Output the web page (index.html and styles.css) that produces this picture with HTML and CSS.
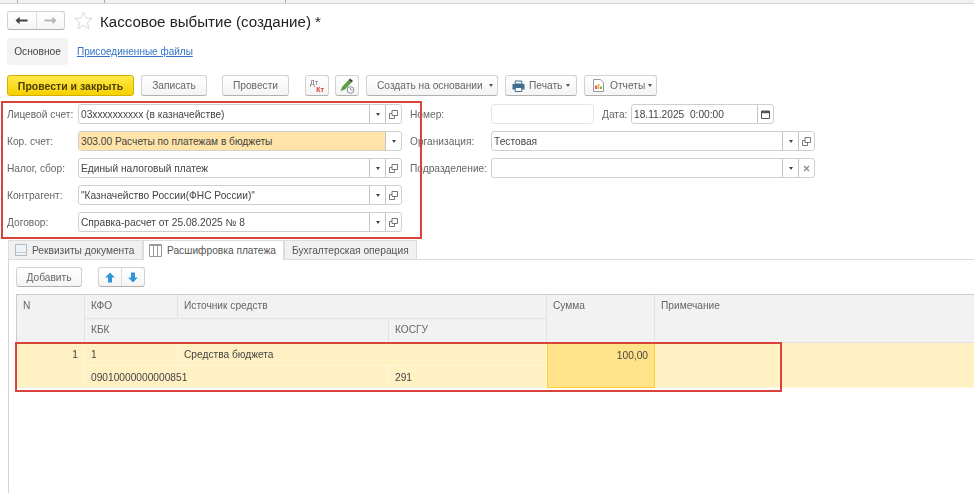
FILE: index.html
```html
<!DOCTYPE html>
<html lang="ru">
<head>
    <meta charset="UTF-8">
    <title>Кассовое выбытие (создание)</title>
    <link rel="stylesheet" href="styles.css">
</head>
<body>
    <div class="page">
        <div class="top-strip">
            <span class="strip-cell strip-a"></span>
            <span class="strip-cell strip-b"></span>
            <span class="strip-cell strip-c"></span>
        </div>

        <div class="title-row">
            <div class="nav-group">
                <button class="nav-btn">
                    <svg width="13" height="9" viewBox="0 0 13 9"><path d="M0.5 4.5 L4.6 0.8 V3.4 H12.5 V5.6 H4.6 V8.2 Z" fill="#444"/></svg>
                </button>
                <button class="nav-btn">
                    <svg width="13" height="9" viewBox="0 0 13 9"><path d="M12.5 4.5 L8.4 0.8 V3.4 H0.5 V5.6 H8.4 V8.2 Z" fill="#b5b5b5"/></svg>
                </button>
            </div>
            <svg class="star" width="19" height="19" viewBox="0 0 19 19"><path d="M9.5 1.2 L12 7 L18.2 7.5 L13.4 11.6 L14.9 17.7 L9.5 14.4 L4.1 17.7 L5.6 11.6 L0.8 7.5 L7 7 Z" fill="#fff" stroke="#d4d8dc"/></svg>
            <h1>Кассовое выбытие (создание) *</h1>
        </div>

        <div class="section-row">
            <span class="section-tab">Основное</span>
            <a class="section-link">Присоединенные файлы</a>
        </div>

        <div class="toolbar">
            <button class="btn btn-main">Провести и закрыть</button>
            <button class="btn btn-save">Записать</button>
            <button class="btn btn-post">Провести</button>
            <button class="btn btn-icon btn-dtkt"><span class="dt">Дт</span><span class="kt">Кт</span></button>
            <button class="btn btn-icon btn-gap">
                <svg width="18" height="18" viewBox="0 0 18 18"><path d="M2.5 14 L4 10 L10.5 3 L13.5 5.5 L7 12.5 Z" fill="#5f9e45"/><path d="M10.5 3 L12 1.6 L15 4 L13.5 5.5 Z" fill="#444"/><circle cx="12.5" cy="13" r="3.3" fill="#fff" stroke="#7a8a96"/><path d="M12.5 11 V13 H14.3" fill="none" stroke="#7a8a96" stroke-width=".8"/></svg>
            </button>
            <button class="btn btn-create">Создать на основании<i class="caret"></i></button>
            <button class="btn btn-print">
                <svg width="13" height="12" viewBox="0 0 13 12"><path d="M3.2 1 H9.8 V4 H3.2 Z" fill="#fff" stroke="#3f6d8e"/><path d="M.5 4 H12.5 V9.5 H.5 Z" fill="#3f6d8e"/><path d="M3.2 7.5 H9.8 V11.5 H3.2 Z" fill="#fff" stroke="#3f6d8e"/></svg>
                <span>Печать</span><i class="caret"></i>
            </button>
            <button class="btn btn-report">
                <svg width="11" height="13" viewBox="0 0 11 13"><path d="M.5 .5 H7.5 L10.5 3.5 V12.5 H.5 Z" fill="#fff" stroke="#999"/><path d="M3 6.5 V10" stroke="#d8352a" stroke-width="1.6"/><path d="M5.5 5 V10" stroke="#e0a820" stroke-width="1.6"/><path d="M8 7.5 V10" stroke="#4f9a3c" stroke-width="1.6"/></svg>
                <span>Отчеты</span><i class="caret"></i>
            </button>
        </div>

        <div class="form">
            <div class="form-left">
                <div class="form-row">
                    <label>Лицевой счет:</label>
                    <div class="field"><span class="field-val">03xxxxxxxxxx (в казначействе)</span><span class="field-btn"><i class="caret-dark"></i></span><span class="field-btn"><svg class="open-icon" width="9" height="9" viewBox="0 0 9 9"><path d="M3 .5 H8.5 V5.5 H3 Z M.5 3.5 H3 M.5 3.5 V8.5 H5.5 V5.5" fill="none" stroke="#777"/></svg></span></div>
                </div>
                <div class="form-row">
                    <label>Кор. счет:</label>
                    <div class="field"><span class="field-val field-required">303.00 Расчеты по платежам в бюджеты</span><span class="field-btn"><i class="caret-dark"></i></span></div>
                </div>
                <div class="form-row">
                    <label>Налог, сбор:</label>
                    <div class="field"><span class="field-val">Единый налоговый платеж</span><span class="field-btn"><i class="caret-dark"></i></span><span class="field-btn"><svg class="open-icon" width="9" height="9" viewBox="0 0 9 9"><path d="M3 .5 H8.5 V5.5 H3 Z M.5 3.5 H3 M.5 3.5 V8.5 H5.5 V5.5" fill="none" stroke="#777"/></svg></span></div>
                </div>
                <div class="form-row">
                    <label>Контрагент:</label>
                    <div class="field"><span class="field-val">"Казначейство России(ФНС России)"</span><span class="field-btn"><i class="caret-dark"></i></span><span class="field-btn"><svg class="open-icon" width="9" height="9" viewBox="0 0 9 9"><path d="M3 .5 H8.5 V5.5 H3 Z M.5 3.5 H3 M.5 3.5 V8.5 H5.5 V5.5" fill="none" stroke="#777"/></svg></span></div>
                </div>
                <div class="form-row">
                    <label>Договор:</label>
                    <div class="field"><span class="field-val">Справка-расчет от 25.08.2025 № 8</span><span class="field-btn"><i class="caret-dark"></i></span><span class="field-btn"><svg class="open-icon" width="9" height="9" viewBox="0 0 9 9"><path d="M3 .5 H8.5 V5.5 H3 Z M.5 3.5 H3 M.5 3.5 V8.5 H5.5 V5.5" fill="none" stroke="#777"/></svg></span></div>
                </div>
            </div>
            <div class="form-right">
                <div class="form-row">
                    <label class="label-right">Номер:</label>
                    <div class="field field-number"><span class="field-val"></span></div>
                    <label class="label-date">Дата:</label>
                    <div class="field field-date"><span class="field-val">18.11.2025&nbsp; 0:00:00</span><span class="field-btn"><svg width="9" height="9" viewBox="0 0 9 9"><path d="M.5 1 H8.5 V8.5 H.5 Z" fill="#fff" stroke="#555"/><path d="M.5 1 H8.5 V3.2 H.5 Z" fill="#555"/></svg></span></div>
                </div>
                <div class="form-row">
                    <label class="label-right">Организация:</label>
                    <div class="field field-wide"><span class="field-val">Тестовая</span><span class="field-btn"><i class="caret-dark"></i></span><span class="field-btn"><svg class="open-icon" width="9" height="9" viewBox="0 0 9 9"><path d="M3 .5 H8.5 V5.5 H3 Z M.5 3.5 H3 M.5 3.5 V8.5 H5.5 V5.5" fill="none" stroke="#777"/></svg></span></div>
                </div>
                <div class="form-row">
                    <label class="label-right">Подразделение:</label>
                    <div class="field field-wide"><span class="field-val"></span><span class="field-btn"><i class="caret-dark"></i></span><span class="field-btn"><svg width="7" height="7" viewBox="0 0 7 7"><path d="M1 1 L6 6 M6 1 L1 6" stroke="#888" stroke-width="1.2"/></svg></span></div>
                </div>
            </div>
        </div>

        <div class="tabs">
            <span class="tab tab-1">
                <svg width="12" height="12" viewBox="0 0 12 12"><rect x=".5" y=".5" width="11" height="11" fill="#eef3f8" stroke="#b4bcc4"/><path d="M1 8.5 H11" stroke="#c3ccd4"/></svg>
                Реквизиты документа
            </span>
            <span class="tab tab-2 tab-active">
                <svg width="13" height="13" viewBox="0 0 13 13"><path d="M.5 .5 H12.5 V12.5 H.5 Z M4.5 .5 V12.5 M8.5 .5 V12.5" fill="none" stroke="#999"/><path d="M.5 1.5 H12.5" stroke="#999"/></svg>
                Расшифровка платежа
            </span>
            <span class="tab tab-3">Бухгалтерская операция</span>
        </div>

        <div class="panel">
            <div class="panel-bar">
                <button class="btn btn-add">Добавить</button>
                <div class="move-group">
                    <button class="move-btn"><svg width="10" height="11" viewBox="0 0 10 11"><path d="M5 .5 L9.8 5.5 H7 V10.5 H3 V5.5 H.2 Z" fill="#2f95d8"/></svg></button>
                    <button class="move-btn"><svg width="10" height="11" viewBox="0 0 10 11"><path d="M5 10.5 L9.8 5.5 H7 V.5 H3 V5.5 H.2 Z" fill="#2f95d8"/></svg></button>
                </div>
            </div>

            <div class="grid">
                <div class="cell head c-n">N</div>
                <div class="cell head c-kfo">КФО</div>
                <div class="cell head c-src">Источник средств</div>
                <div class="cell head c-sum">Сумма</div>
                <div class="cell head c-note">Примечание</div>
                <div class="cell head c-kbk">КБК</div>
                <div class="cell head c-kosgu">КОСГУ</div>

                <div class="cell row c-n num">1</div>
                <div class="cell row c-kfo">1</div>
                <div class="cell row c-src">Средства бюджета</div>
                <div class="cell row c-sum sum-active num">100,00</div>
                <div class="cell row c-note"></div>
                <div class="cell row c-kbk">09010000000000851</div>
                <div class="cell row c-kosgu">291</div>
            </div>
        </div>

        <div class="mark mark-form"></div>
        <div class="mark mark-row"></div>
    </div>
</body>
</html>
```

FILE: styles.css
```css
* {
    box-sizing: border-box;
}
html, body {
    margin: 0;
    height: 100%;
    background: #fff;
}
.page {
    position: relative;
    width: 974px;
    height: 493px;
    overflow: hidden;
    font-family: "Liberation Sans", Arial, sans-serif;
    font-size: 10.2px;
    color: #444;
    filter: blur(0.35px);
}
button {
    font: inherit;
    color: inherit;
    cursor: pointer;
}

/* top strip */
.top-strip {
    display: flex;
    height: 4px;
    background: #f2f2f2;
    border-bottom: 1px solid #d4d4d4;
}
.strip-cell {
    border-right: 1px solid #aaa;
}
.strip-a { width: 18px; }
.strip-b { width: 87px; }
.strip-c { width: 181px; }

/* title */
.title-row {
    display: flex;
    align-items: center;
    height: 20px;
    margin-top: 6px;
    padding-left: 7px;
}
.nav-group {
    display: flex;
    width: 58px;
    height: 19px;
    border: 1px solid #d2d2d2;
    border-bottom-color: #b0b0b0;
    border-radius: 3px;
    background: linear-gradient(#fff, #f5f5f5);
}
.nav-btn {
    flex: 1;
    display: flex;
    align-items: center;
    justify-content: center;
    padding: 0;
    border: 0;
    background: none;
}
.nav-btn + .nav-btn {
    border-left: 1px solid #ddd;
}
.star {
    margin-left: 9px;
}
h1 {
    margin: 2px 0 0 7px;
    font-size: 15.1px;
    font-weight: normal;
    color: #222;
}

/* sections */
.section-row {
    display: flex;
    align-items: center;
    height: 27px;
    margin-top: 8px;
    padding-left: 7px;
}
.section-tab {
    display: flex;
    align-items: center;
    justify-content: center;
    width: 61px;
    height: 27px;
    background: #f3f3f3;
    border-radius: 3px;
}
.section-link {
    margin-left: 9px;
    font-size: 10px;
    color: #3273c9;
    text-decoration: underline;
}

/* toolbar */
.toolbar {
    display: flex;
    height: 21px;
    margin-top: 10px;
    padding-left: 7px;
}
.btn {
    display: flex;
    align-items: center;
    justify-content: center;
    height: 21px;
    padding: 0;
    border: 1px solid #d2d2d2;
    border-bottom-color: #b0b0b0;
    border-radius: 3px;
    background: linear-gradient(#fff, #f4f4f4);
    color: #666;
    white-space: nowrap;
}
.btn-main {
    width: 127px;
    border-color: #d0b000;
    background: linear-gradient(#ffe94a, #f8d000);
    color: #4a3f00;
    font-size: 10.5px;
    font-weight: bold;
}
.btn-save { width: 66px; margin-left: 7px; }
.btn-post { width: 67px; margin-left: 15px; }
.btn-icon { width: 24px; margin-left: 16px; }
.btn-gap { margin-left: 6px; }
.btn-create { width: 132px; margin-left: 7px; justify-content: flex-start; padding-left: 10px; }
.btn-print { width: 72px; margin-left: 7px; justify-content: flex-start; padding-left: 6px; gap: 4px; }
.btn-report { width: 73px; margin-left: 7px; justify-content: flex-start; padding-left: 8px; gap: 6px; }
.btn-print .caret { margin-left: 0; }
.btn-report .caret { margin-left: -3px; }
.caret {
    width: 0;
    height: 0;
    margin-left: 6px;
    border: 2.5px solid transparent;
    border-top: 3px solid #555;
    border-bottom: 0;
}
.btn-dtkt {
    flex-direction: column;
    align-items: stretch;
    font-size: 7px;
    line-height: 7px;
    padding: 0 4px;
}
.dt { color: #667; text-align: left; }
.kt { color: #d8352a; font-weight: bold; text-align: right; }

/* form */
.form {
    display: flex;
    margin-top: 8px;
    padding-left: 7px;
}
.form-left {
    width: 403px;
    display: flex;
    flex-direction: column;
    gap: 7px;
}
.form-right {
    display: flex;
    flex-direction: column;
    gap: 7px;
}
.form-row {
    display: flex;
    align-items: center;
    height: 20px;
}
label {
    width: 71px;
    color: #666;
}
.label-right {
    width: 81px;
}
.label-date {
    width: 29px;
    margin-left: 8px;
}
.field {
    display: flex;
    width: 324px;
    height: 20px;
    border: 1px solid #cfcfcf;
    border-radius: 3px;
    background: #fff;
    overflow: hidden;
}
.field-number { width: 103px; border-color: #e6e6e6; }
.field-date { width: 143px; }
.field-wide { width: 324px; }
.field-val {
    flex: 1;
    padding-left: 2px;
    line-height: 19px;
    white-space: nowrap;
}
.field-required {
    background: #ffe3a8;
}
.field-btn {
    display: flex;
    align-items: center;
    justify-content: center;
    width: 16px;
    border-left: 1px solid #c4c4c4;
}
.caret-dark {
    width: 0;
    height: 0;
    border: 2.5px solid transparent;
    border-top: 3px solid #444;
    border-bottom: 0;
}

/* tabs */
.tabs {
    display: flex;
    height: 19px;
    margin-top: 8px;
    padding-left: 8px;
}
.tab {
    display: flex;
    align-items: center;
    gap: 5px;
    padding-left: 6px;
    border: 1px solid #dcdcdc;
    border-bottom: 0;
    background: #f0f0f0;
    color: #555;
}
.tab-1 { width: 135px; }
.tab-2 { width: 141px; padding-left: 5px; }
.tab-3 { width: 133px; padding-left: 7px; }
.tab-active {
    position: relative;
    z-index: 1;
    height: 20px;
    background: #fff;
}

/* panel */
.panel {
    height: 234px;
    margin-left: 8px;
    padding: 7px 0 0 7px;
    border-top: 1px solid #dcdcdc;
    border-left: 1px solid #d4d4d4;
}
.panel-bar {
    display: flex;
    height: 20px;
}
.btn-add {
    width: 66px;
    height: 20px;
}
.move-group {
    display: flex;
    width: 47px;
    height: 20px;
    margin-left: 16px;
    border: 1px solid #d2d2d2;
    border-bottom-color: #b0b0b0;
    border-radius: 3px;
    background: linear-gradient(#fff, #f4f4f4);
}
.move-btn {
    flex: 1;
    display: flex;
    align-items: center;
    justify-content: center;
    padding: 0;
    border: 0;
    background: none;
}
.move-btn + .move-btn {
    border-left: 1px solid #ddd;
}

/* table */
.grid {
    display: grid;
    grid-template-columns: 68px 93px 211px 158px 108px 320px;
    grid-template-rows: 24px 24px 23px 22px;
    margin-top: 7px;
    width: 958px;
    border-top: 1px solid #ccc;
    border-left: 1px solid #ccc;
}
.cell {
    padding: 5px 6px;
    white-space: nowrap;
    color: #555;
}
.head {
    background: #f2f2f2;
    color: #666;
    border-right: 1px solid #e2e2e2;
    border-bottom: 1px solid #e2e2e2;
}
.row {
    padding-top: 6px;
    background: #fff1c4;
    color: #444;
    border-right: 1px solid #fff7dc;
    border-bottom: 1px solid #fff7dc;
}
.num {
    text-align: right;
}
.c-n { grid-column: 1; grid-row: span 2; }
.c-kfo { grid-column: 2; }
.c-src { grid-column: 3 / 5; }
.c-sum { grid-column: 5; grid-row: span 2; }
.c-note { grid-column: 6; grid-row: span 2; }
.c-kbk { grid-column: 2 / 4; }
.c-kosgu { grid-column: 4; }
.sum-active {
    background: #ffe38a;
    border: 1px solid #ffcf33;
}

/* red marks over the screenshot */
.mark {
    position: absolute;
    border: 2px solid #d8433a;
    pointer-events: none;
}
.mark-form {
    left: 1px;
    top: 101px;
    width: 421px;
    height: 138px;
}
.mark-row {
    left: 15px;
    top: 342px;
    width: 767px;
    height: 50px;
}
```
